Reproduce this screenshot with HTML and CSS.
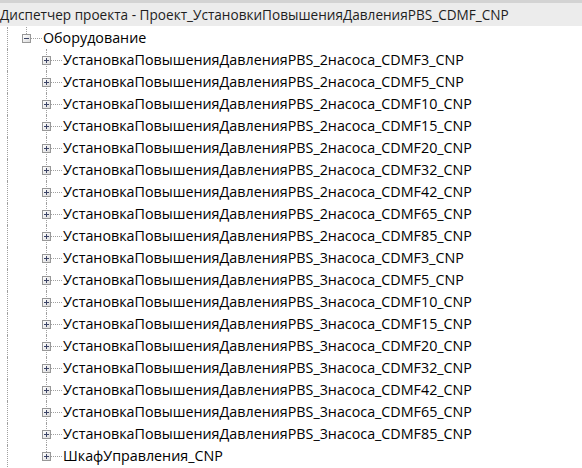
FILE: index.html
```html
<!DOCTYPE html>
<html lang="ru">
<head>
    <meta charset="UTF-8">
    <title>Диспетчер проекта</title>
    <link rel="stylesheet" href="styles.css">
</head>
<body>
    <div class="header">Диспетчер проекта - Проект_УстановкиПовышенияДавленияPBS_CDMF_CNP</div>
    <div class="tree">
        <div class="row">
            <span class="cell line"></span>
            <span class="cell branch last"><span class="toggle open"></span></span>
            <span class="label">Оборудование</span>
        </div>
        <div class="children"></div>
    </div>
    <script>
        const items = [
            'УстановкаПовышенияДавленияPBS_2насоса_CDMF3_CNP',
            'УстановкаПовышенияДавленияPBS_2насоса_CDMF5_CNP',
            'УстановкаПовышенияДавленияPBS_2насоса_CDMF10_CNP',
            'УстановкаПовышенияДавленияPBS_2насоса_CDMF15_CNP',
            'УстановкаПовышенияДавленияPBS_2насоса_CDMF20_CNP',
            'УстановкаПовышенияДавленияPBS_2насоса_CDMF32_CNP',
            'УстановкаПовышенияДавленияPBS_2насоса_CDMF42_CNP',
            'УстановкаПовышенияДавленияPBS_2насоса_CDMF65_CNP',
            'УстановкаПовышенияДавленияPBS_2насоса_CDMF85_CNP',
            'УстановкаПовышенияДавленияPBS_3насоса_CDMF3_CNP',
            'УстановкаПовышенияДавленияPBS_3насоса_CDMF5_CNP',
            'УстановкаПовышенияДавленияPBS_3насоса_CDMF10_CNP',
            'УстановкаПовышенияДавленияPBS_3насоса_CDMF15_CNP',
            'УстановкаПовышенияДавленияPBS_3насоса_CDMF20_CNP',
            'УстановкаПовышенияДавленияPBS_3насоса_CDMF32_CNP',
            'УстановкаПовышенияДавленияPBS_3насоса_CDMF42_CNP',
            'УстановкаПовышенияДавленияPBS_3насоса_CDMF65_CNP',
            'УстановкаПовышенияДавленияPBS_3насоса_CDMF85_CNP',
            'ШкафУправления_CNP'
        ];
        const list = document.querySelector('.children');
        items.forEach((name, i) => {
            const row = document.createElement('div');
            row.className = 'row';
            const last = i === items.length - 1 ? ' last' : '';
            row.innerHTML =
                '<span class="cell line"></span>' +
                '<span class="cell"></span>' +
                '<span class="cell branch' + last + '"><span class="toggle"></span></span>' +
                '<span class="label"></span>';
            row.querySelector('.label').textContent = name;
            list.appendChild(row);
        });
    </script>
</body>
</html>
```

FILE: styles.css
```css
body {
    margin: 0;
    background: #ffffff;
    font-family: 'Open Sans', 'Noto Sans', sans-serif;
    color: #000000;
    overflow: hidden;
}
.header {
    height: 23px;
    line-height: 23px;
    border-top: 3px solid #d3d3d3;
    background: #ececec;
    color: #1e1e1e;
    font-size: 13.6px;
    white-space: nowrap;
}
.tree {
    padding-top: 1px;
    font-size: 14.3px;
}
.row {
    display: flex;
    align-items: center;
    height: 22px;
    white-space: nowrap;
}
.cell {
    position: relative;
    flex: none;
    width: 20px;
    height: 22px;
}
.cell.line::before {
    content: '';
    position: absolute;
    left: 7px;
    top: 0;
    bottom: 0;
    border-left: 1px dotted #a0a0a0;
}
.branch::before {
    content: '';
    position: absolute;
    left: 6px;
    top: 0;
    bottom: 0;
    border-left: 1px dotted #a0a0a0;
}
.branch.last::before {
    bottom: 11px;
}
.branch::after {
    content: '';
    position: absolute;
    left: 11px;
    right: -2px;
    top: 11px;
    border-top: 1px dotted #a0a0a0;
}
.toggle {
    position: absolute;
    left: 2px;
    top: 7px;
    width: 7px;
    height: 7px;
    border: 1px solid #989898;
    background: linear-gradient(135deg, #ffffff, #dcdcdc);
    z-index: 1;
}
.toggle::before {
    content: '';
    position: absolute;
    left: 1px;
    top: 3px;
    width: 5px;
    height: 1px;
    background: #3c4466;
}
.toggle::after {
    content: '';
    position: absolute;
    left: 3px;
    top: 1px;
    width: 1px;
    height: 5px;
    background: #3c4466;
}
.toggle.open::after {
    display: none;
}
.label {
    padding-left: 3px;
    line-height: 22px;
}
```
